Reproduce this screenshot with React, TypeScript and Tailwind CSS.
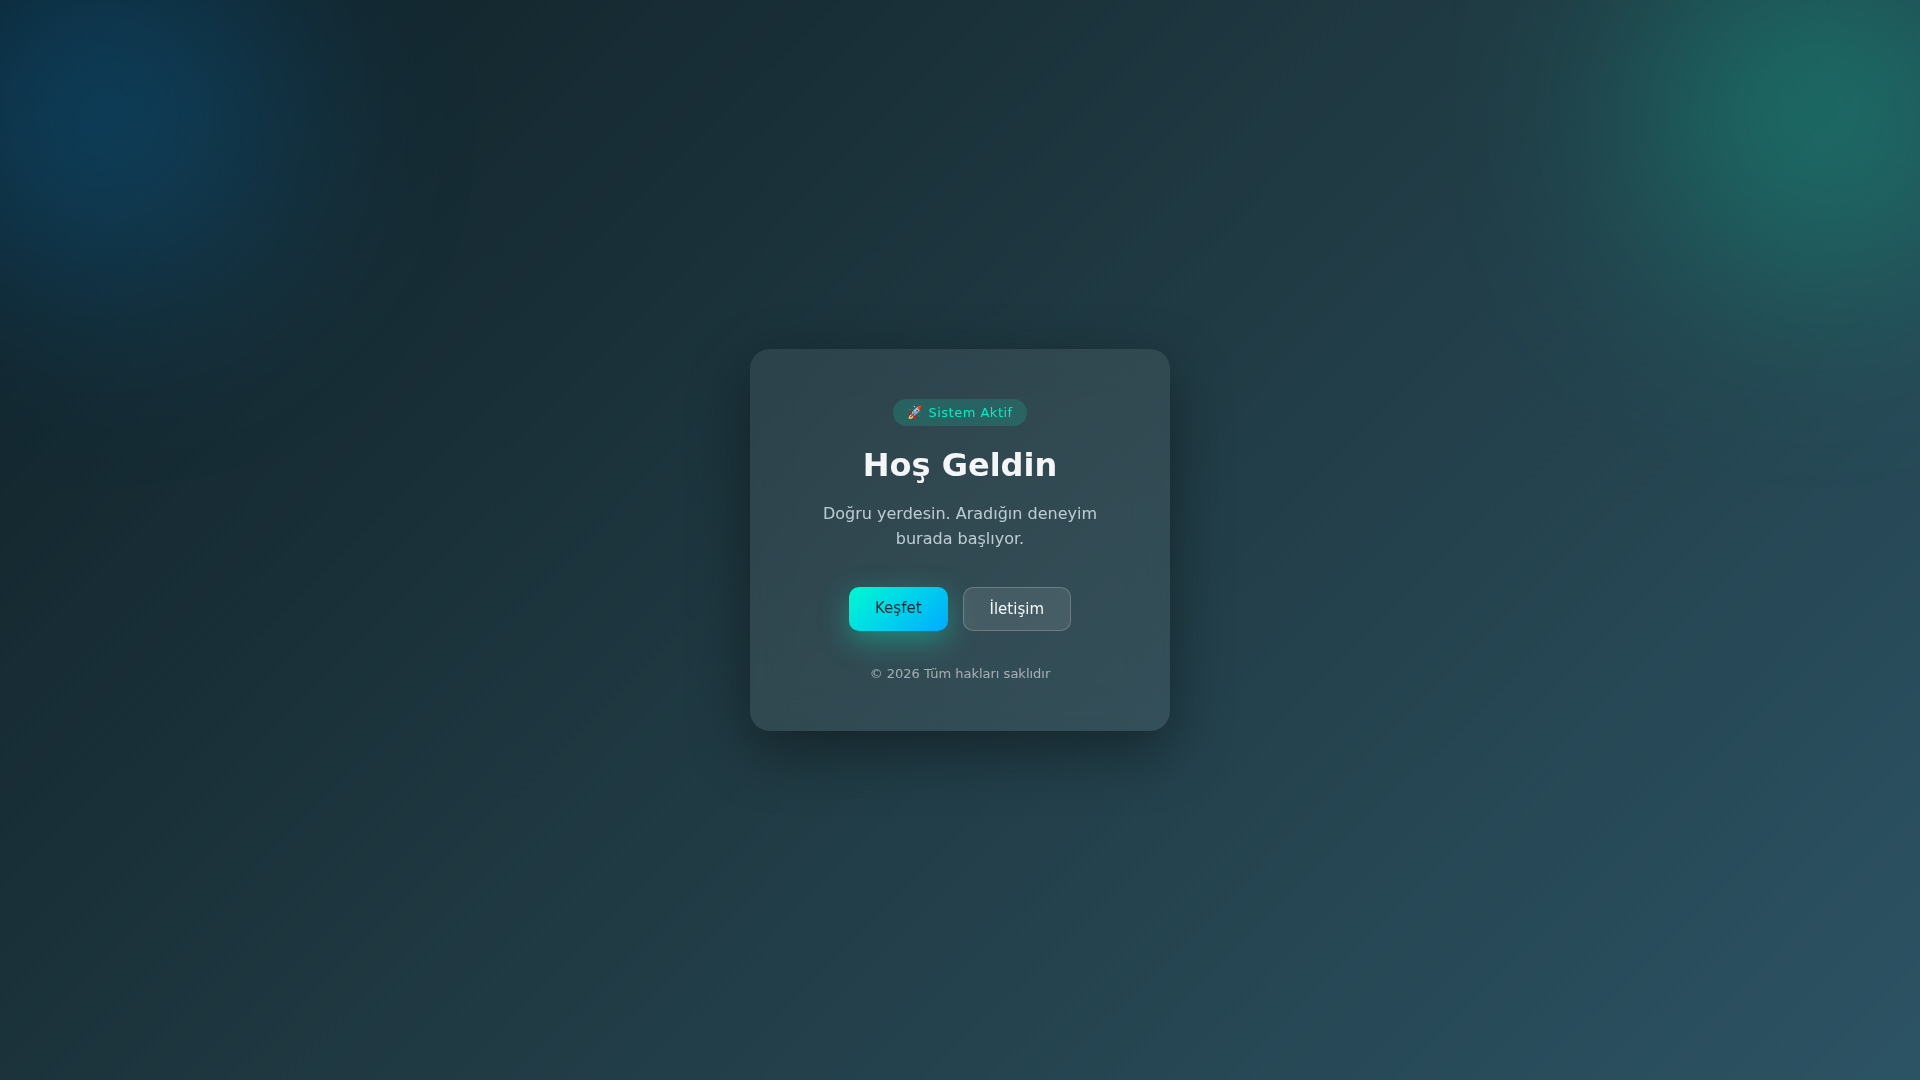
const actions = [
  {
    label: 'Keşfet',
    href: '#kesfet',
    className:
      'bg-linear-135 from-[#00f9d0] to-[#00aaff] text-[#0f2c33] shadow-[0_10px_30px_rgba(0,255,204,0.35)] hover:brightness-110'
  },
  {
    label: 'İletişim',
    href: '#iletisim',
    className: 'border border-white/20 bg-white/10 text-white/95 hover:bg-white/20'
  }
];

export default function App() {
  return (
    <main className="relative flex min-h-screen items-center justify-center overflow-hidden bg-[linear-gradient(135deg,#0f2027,#203a43,#2c5364)] font-['DejaVu_Sans',sans-serif] text-white">
      {/* Background glows */}
      <div className="absolute -left-[50px] -top-10 h-[300px] w-[300px] rounded-full bg-[#0099ff] opacity-35 blur-[120px]" />
      <div className="absolute -right-[50px] -top-10 h-[300px] w-[300px] rounded-full bg-[#00ffbb] opacity-35 blur-[120px]" />

      {/* Welcome card */}
      <section className="relative w-full max-w-[420px] rounded-[20px] bg-white/8 px-[50px] py-[50px] text-center shadow-[0_20px_60px_rgba(0,0,0,0.4)] backdrop-blur-[20px]">
        <span className="inline-block rounded-full bg-[#00ffc8]/15 px-[14px] py-[6px] text-[13px] leading-[15px] tracking-[0.5px] text-[#00f0c4]">
          🚀 Sistem Aktif
        </span>

        <h1 className="mt-5 text-[32px] font-bold leading-[38px] text-white/95">Hoş Geldin</h1>

        <p className="mt-[17px] text-base leading-[25px] text-[#d6e3ea]/85">
          Doğru yerdesin. Aradığın deneyim burada başlıyor.
        </p>

        <div className="mt-[36px] flex justify-center gap-[15px]">
          {actions.map((action) => (
            <a
              key={action.href}
              href={action.href}
              className={`rounded-[10px] px-[26px] py-3 text-[15px] leading-[18px] transition-all ${action.className}`}
            >
              {action.label}
            </a>
          ))}
        </div>

        <footer className="mt-[35px] text-[13px] leading-[15px] text-white/55">
          © 2026 Tüm hakları saklıdır
        </footer>
      </section>
    </main>
  );
}
